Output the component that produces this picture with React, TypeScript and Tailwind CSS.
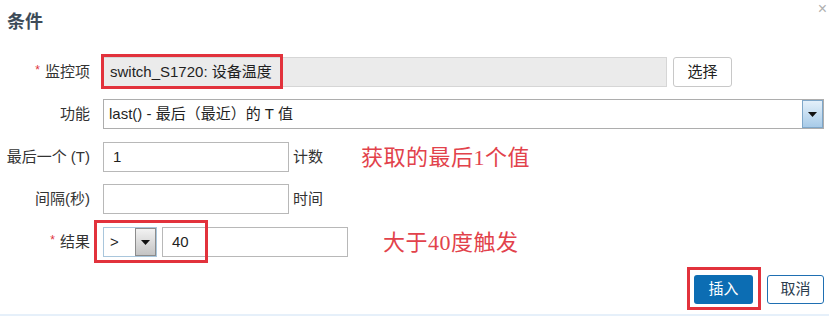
import React from 'react';

const font = { fontFamily: '"Liberation Sans", "Noto Sans CJK SC", sans-serif' };
const serif = { fontFamily: '"Liberation Serif", "Noto Sans CJK SC", serif' };

function Arrow({ blue }: { blue?: boolean }) {
  return (
    <div
      className={
        blue
          ? 'w-[21px] h-full flex items-center justify-center border border-[#7fa7c9] bg-gradient-to-b from-[#e4f0fa] to-[#a8cbe8]'
          : 'w-[21px] h-full flex items-center justify-center border border-[#8c8c8c] bg-gradient-to-b from-[#f2f2f2] to-[#c4c4c4]'
      }
    >
      <svg width="9" height="5" viewBox="0 0 9 5">
        <path d="M0 0 L9 0 L4.5 5 Z" fill="#111" />
      </svg>
    </div>
  );
}

function Label({ text, required }: { text: string; required?: boolean }) {
  return (
    <div className="w-[90px] shrink-0 text-right text-[15px] text-[#333] whitespace-nowrap">
      {required && <span className="text-[#e0333c] text-[12px] mr-[5px] align-top">*</span>}
      {text}
    </div>
  );
}

export default function App() {
  return (
    <div className="w-[829px] h-[316px] bg-white relative overflow-hidden flex flex-col" style={font}>
      {/* Close */}
      <div className="absolute right-[2px] top-[1px] text-[#b0b0b0] text-[16px] leading-none">×</div>

      {/* Title */}
      <div className="pl-[7px] pt-[10px] h-[35px] text-[18px] font-bold text-[#3d4b58] leading-[24px]">条件</div>

      {/* 监控项 */}
      <div className="flex items-center mt-[22px] h-[30px]">
        <Label text="监控项" required />
        <div className="ml-[13px] relative w-[564px] h-[30px] bg-[#ebebeb] border border-[#d6d6d6] flex items-center pl-[6px] text-[15px] text-[#1f1f1f]">
          switch_S1720: 设备温度
          <div className="absolute left-[-3px] top-[-4px] w-[182px] h-[35px] border-[3px] border-[#e2323c]" />
        </div>
        <button className="ml-[6px] w-[59px] h-[30px] bg-white border border-[#c8c8c8] rounded-[3px] text-[15px] text-[#222]">
          选择
        </button>
      </div>

      {/* 功能 */}
      <div className="flex items-center mt-[12px] h-[30px]">
        <Label text="功能" />
        <div className="ml-[13px] w-[721px] h-[30px] flex border border-[#adadad] bg-white">
          <div className="flex-1 flex items-center pl-[5px] text-[15px] text-[#1f1f1f]">last() - 最后（最近）的 T 值</div>
          <Arrow blue />
        </div>
      </div>

      {/* 最后一个 (T) */}
      <div className="flex items-center mt-[13px] h-[30px]">
        <Label text="最后一个 (T)" />
        <div className="ml-[13px] w-[186px] h-[30px] border border-[#b8b8b8] bg-white flex items-center pl-[9px] text-[15px] text-[#1f1f1f]">
          1
        </div>
        <div className="ml-[4px] text-[15px] text-[#333]">计数</div>
        <div className="ml-[38px] text-[22px] text-[#e2424b] tracking-[0.5px]" style={serif}>
          获取的最后1个值
        </div>
      </div>

      {/* 间隔(秒) */}
      <div className="flex items-center mt-[12px] h-[30px]">
        <Label text="间隔(秒)" />
        <div className="ml-[13px] w-[186px] h-[30px] border border-[#b8b8b8] bg-white" />
        <div className="ml-[4px] text-[15px] text-[#333]">时间</div>
      </div>

      {/* 结果 */}
      <div className="flex items-center mt-[13px] h-[30px]">
        <Label text="结果" required />
        <div className="ml-[13px] relative flex items-center h-[30px]">
          <div className="w-[54px] h-[30px] flex border border-[#a9c6dc] bg-white">
            <div className="flex-1 flex items-center pl-[6px] text-[15px] text-[#1f1f1f]">&gt;</div>
            <Arrow />
          </div>
          <div className="ml-[5px] w-[186px] h-[30px] border border-[#b8b8b8] bg-white flex items-center pl-[9px] text-[15px] text-[#1f1f1f]">
            40
          </div>
          <div className="absolute left-[-9px] top-[-7px] w-[114px] h-[43px] border-[3px] border-[#e2323c]" />
        </div>
        <div className="ml-[35px] text-[22px] text-[#e2424b] tracking-[0.5px]" style={serif}>
          大于40度触发
        </div>
      </div>

      {/* Buttons */}
      <div className="flex justify-end mt-[18px] pr-[5px] gap-[14px]">
        <div className="relative">
          <button className="w-[59px] h-[29px] bg-[#0c6db3] rounded-[3px] text-[15px] text-white">插入</button>
          <div className="absolute left-[-7px] top-[-8px] w-[74px] h-[43px] border-[3px] border-[#e2323c]" />
        </div>
        <button className="w-[57px] h-[29px] bg-white border border-[#1f6fb2] rounded-[3px] text-[15px] text-[#2d3e4f]">
          取消
        </button>
      </div>

      <div className="mt-auto h-[2px] bg-[#e6f0fa]" />
    </div>
  );
}
